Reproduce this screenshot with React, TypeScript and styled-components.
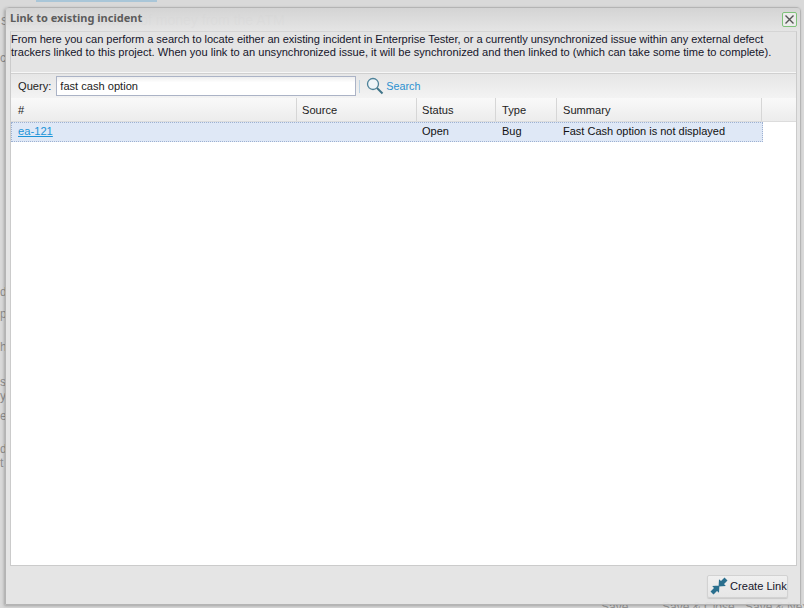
import React from "react";
import styled, { createGlobalStyle } from "styled-components";

const Global = createGlobalStyle`
  html, body { margin: 0; padding: 0; background: #d8d8d8; overflow: hidden; }
  body { font-family: "Liberation Sans", Arial, sans-serif; font-size: 11.1px; color: #15152a; }
`;
const Page = styled.div`
  position: relative; width: 804px; height: 608px; overflow: hidden;
  background: #d9d9d9; display: flex; flex-direction: column;
`;
const TopLink = styled.div`
  flex: none; width: 121px; height: 2px; margin-left: 36px; background: #a9c6d8;
`;
const BackHeading = styled.div`
  flex: none; height: 16px; margin: 10px 0 0 1px; color: #8f8f8f; font-size: 14px; line-height: 16px; white-space: nowrap;
`;
const BackColumn = styled.div`
  flex: 1; display: flex; flex-direction: column; min-height: 0;
`;
const BackLine = styled.div<{ $h: number }>`
  flex: none; height: ${p => p.$h}px; display: flex; align-items: flex-end;
  color: #8e8e8e; font-size: 12px; line-height: 14px; white-space: nowrap;
`;
const BackActions = styled.div`
  flex: none; height: 8px; display: flex; padding-left: 601px;
`;
const BackAction = styled.span<{ $w: number }>`
  flex: none; width: ${p => p.$w}px; color: #9a9a9a; font-size: 12px; line-height: 14px; white-space: nowrap;
`;
const Window = styled.div`
  position: absolute; left: 5px; top: 7px; width: 796px; height: 598px; box-sizing: border-box;
  background: rgba(229,229,229,0.93); border: 1px solid #b4b4b4; border-radius: 4px 4px 0 0;
  box-shadow: -1px 1px 3px rgba(0,0,0,.25);
  padding: 0 3px 0 4px; display: flex; flex-direction: column;
`;
const TitleBar = styled.div`
  height: 23px; flex: none; display: flex; align-items: flex-start; justify-content: space-between;
  background: linear-gradient(rgba(206,206,206,.75), rgba(228,228,228,.3));
  margin: 0 -3px 0 -4px; padding: 3px 3px 0 4px; box-sizing: border-box;
`;
const Title = styled.div`
  font: bold 11px/14px "Noto Sans", sans-serif; color: #5c5c5c;
`;
const CloseBtn = styled.button`
  width: 15px; height: 15px; margin-top: 1px; padding: 0; border: 1px solid #7fc27a; border-radius: 2px;
  background: #ececec; display: flex; align-items: center; justify-content: center;
`;
const Panel = styled.div`
  flex: 1; display: flex; flex-direction: column; min-height: 0;
  border: 1px solid #cbcbcb; border-top-color: #d5d5d5;
`;
const Description = styled.div`
  height: 41px; flex: none; box-sizing: border-box; padding-top: 1px; font-size: 11.1px; line-height: 13px;
  border-bottom: 1px solid #f6f6f6; background: #e4e4e4; white-space: nowrap;
`;
const DescLine = styled.div<{ $spacing?: number }>`
  letter-spacing: ${p => p.$spacing ?? 0}px;
`;
const Toolbar = styled.div`
  height: 25px; flex: none; display: flex; align-items: center; padding-left: 7px;
  background: linear-gradient(#e6e6e6, #f3f3f3); border-top: 1px solid #d0d0d0; box-sizing: border-box;
`;
const QueryLabel = styled.label`
  font-size: 11.1px; color: #222; margin-right: 5px;
`;
const QueryInput = styled.input`
  box-sizing: border-box; width: 300px; height: 20px; border: 1px solid #abb3c6; padding: 0 3px;
  font: 11.1px "Liberation Sans", sans-serif; color: #222;
  background: linear-gradient(#eee, #fff 30%); outline: none;
`;
const Separator = styled.div`
  width: 1px; height: 13px; background: #bcd3e4; margin: 0 6px 0 3px;
`;
const SearchButton = styled.div`
  display: flex; align-items: center; gap: 2px; color: #2b90d0; font-size: 10.8px;
`;
const Grid = styled.div`
  flex: 1; background: #fff; min-height: 0;
`;
const HeaderRow = styled.div`
  display: flex; height: 24px; box-sizing: border-box; background: linear-gradient(#f9f9f9, #ececec);
  border-bottom: 1px solid #dcdcdc;
`;
const HeadCell = styled.div<{ $w: number; $pad: number }>`
  width: ${p => p.$w}px; flex: none; box-sizing: border-box; padding-left: ${p => p.$pad}px; line-height: 24px;
  border-right: 1px solid #d6d6d6; color: #222; font-size: 11.1px;
`;
const Filler = styled.div`flex: 1;`;
const Row = styled.div`
  display: flex; width: 752px; height: 20px; box-sizing: border-box; background: #dfe8f6;
  border: 1px dotted #9db1d2;
`;
const Cell = styled.div<{ $w: number }>`
  width: ${p => p.$w}px; flex: none; box-sizing: border-box; padding: 0 6px; line-height: 17px; color: #111; font-size: 11px;
`;
const IssueLink = styled.a`
  color: #1c94d8; text-decoration: underline; font-size: 11.2px;
`;
const Footer = styled.div`
  height: 38px; flex: none; display: flex; justify-content: flex-end; align-items: center; padding: 2px 9px 0 0; box-sizing: border-box;
`;
const CreateButton = styled.button`
  height: 23px; width: 81px; box-sizing: border-box; padding: 0 0 0 2px; display: flex; align-items: center; gap: 2px;
  background: linear-gradient(#f0f0f0, #e6e6e6); border: 1px solid #d2d2d2; border-radius: 2px; white-space: nowrap;
  font: 11.1px "Liberation Sans", sans-serif; color: #15152a; box-shadow: 0 1px 1px rgba(0,0,0,.12);
`;

const cols: [string, number, number][] = [["#", 286, 7], ["Source", 120, 5], ["Status", 79, 5], ["Type", 61, 6], ["Summary", 205, 6]];
const fragments: [string, number][] = [
  ["c", 37], ["", 220], ["d", 14], ["p", 22], ["h", 33], ["s", 35], ["y", 14], ["e", 20], ["d", 33], ["t", 14],
];

export default function App() {
  return (
    <Page>
      <Global />
      <TopLink />
      <BackHeading>successful withdrawal of money from the ATM</BackHeading>
      <BackColumn>
        {fragments.map(([t, h], i) => <BackLine key={i} $h={h}>{t}</BackLine>)}
      </BackColumn>
      <BackActions>
        <BackAction $w={61}>Save</BackAction>
        <BackAction $w={83}>Save &amp; Close</BackAction>
        <BackAction $w={59}>Save &amp; Next</BackAction>
      </BackActions>
      <Window>
        <TitleBar>
          <Title>Link to existing incident</Title>
          <CloseBtn aria-label="Close">
            <svg width="11" height="11" viewBox="0 0 11 11"><path d="M1.5 1.5l8 8M9.5 1.5l-8 8" stroke="#555" strokeWidth="1.4" fill="none" /></svg>
          </CloseBtn>
        </TitleBar>
        <Panel>
          <Description>
            <DescLine $spacing={-0.05}>From here you can perform a search to locate either an existing incident in Enterprise Tester, or a currently unsynchronized issue within any external defect</DescLine>
            <DescLine>trackers linked to this project. When you link to an unsynchronized issue, it will be synchronized and then linked to (which can take some time to complete).</DescLine>
          </Description>
          <Toolbar>
            <QueryLabel>Query:</QueryLabel>
            <QueryInput defaultValue="fast cash option" />
            <Separator />
            <SearchButton>
              <svg width="18" height="18" viewBox="0 0 18 18">
                <circle cx="7" cy="7" r="5.5" fill="#eef4f8" stroke="#4d8299" strokeWidth="1.3" />
                <path d="M11 11l5.5 5.5" stroke="#3f7488" strokeWidth="2" />
              </svg>
              Search
            </SearchButton>
          </Toolbar>
          <Grid>
            <HeaderRow>
              {cols.map(([c, w, pad]) => <HeadCell key={c} $w={w} $pad={pad}>{c}</HeadCell>)}
              <Filler />
            </HeaderRow>
            <Row>
              <Cell $w={404}><IssueLink href="#">ea-121</IssueLink></Cell>
              <Cell $w={80}>Open</Cell>
              <Cell $w={61}>Bug</Cell>
              <Cell $w={203}>Fast Cash option is not displayed</Cell>
            </Row>
          </Grid>
        </Panel>
        <Footer>
          <CreateButton>
            <svg width="18" height="18" viewBox="0 0 18 18">
              <path d="M17.5 3.5L14.5 .5 11 4 9 2.2 8.6 9.4 15.8 9 14 7Z M.5 14.5L3.5 17.5 7 14 9 15.8 9.4 8.6 2.2 9 4 11Z" fill="#2a6f8e" />
            </svg>
            Create Link
          </CreateButton>
        </Footer>
      </Window>
    </Page>
  );
}
